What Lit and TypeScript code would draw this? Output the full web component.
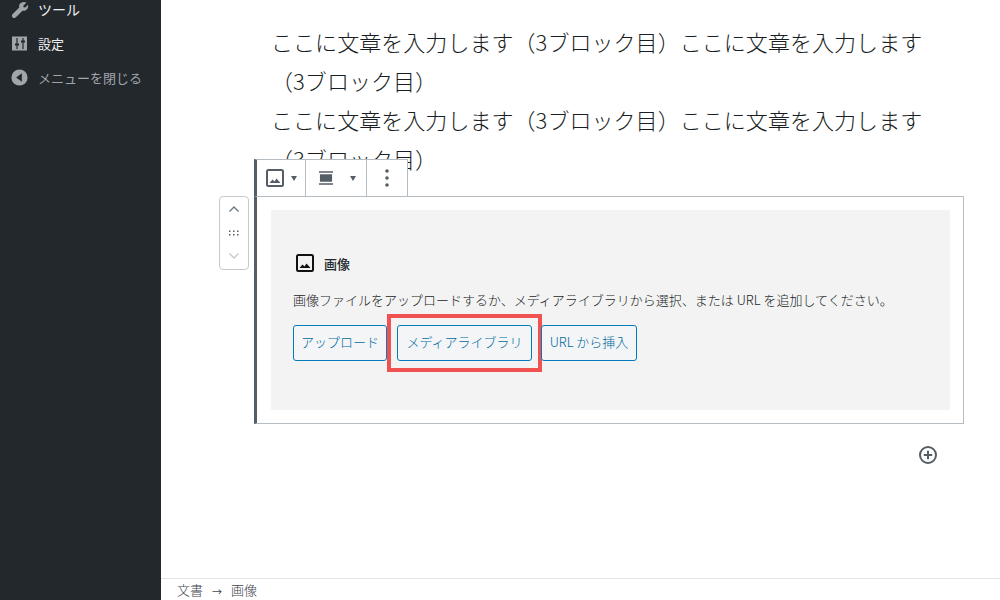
import { LitElement, html, css } from "lit";
import { customElement } from "lit/decorators.js";

const imgIcon = (cls: string) => html`<svg class=${cls} viewBox="0 0 18 18"><rect x="1" y="1" width="16" height="16" rx="1.5" fill="none" stroke="currentColor" stroke-width="2"/><path d="M3.5 14 L6.5 10.5 L8.5 12.4 L10.5 9.5 L14.5 14 Z" fill="currentColor"/></svg>`;

@customElement("app-root")
export class AppRoot extends LitElement {
  static styles = css`
    :host { display: flex; width: 1000px; height: 600px; overflow: hidden; background: #fff; font-family: "Noto Sans CJK JP", "Noto Sans", sans-serif; font-weight: 300; color: #23282d; }
    .side { width: 161px; flex: none; background: #23282d; display: flex; flex-direction: column; box-sizing: border-box; }
    .item { height: 34.5px; display: flex; align-items: center; gap: 9px; padding-left: 10px; font-size: 13px; font-weight: 400; color: #eee; }
    .item:first-child { height: 20px; align-items: flex-end; margin-top: -1px; margin-bottom: 7px; font-size: 14px; }
    .item.dim { color: #a0a5aa; }
    .item svg { width: 19px; height: 19px; flex: none; }
    .main { flex: 1; min-width: 0; display: flex; flex-direction: column; }
    .scroll { flex: 1; min-height: 0; overflow: hidden; padding-top: 22px; box-sizing: border-box; }
    .text { margin: 0 0 0 110px; width: 662px; font-size: 22px; letter-spacing: 0.05px; line-height: 39px; color: #191e23; }
    .block { position: relative; margin: 18px 0 0 93px; width: 710px; height: 228px; box-sizing: border-box; border: 1px solid #b5bcc2; border-left: 3px solid #555d66; padding: 13px 13px 13px 14px; }
    .toolbar { position: absolute; left: -3px; top: -38px; height: 36px; border-left: 3px solid #555d66; display: flex; background: #fff; border-top: 1px solid #b5bcc2; }
    .tb { display: flex; align-items: center; border-right: 1px solid #b5bcc2; box-sizing: border-box; color: #555d66; }
    .tb1 { width: 49px; padding-left: 9px; gap: 7px; }
    .tb2 { width: 61px; padding-left: 13px; gap: 17px; }
    .tb3 { width: 41px; justify-content: center; }
    .tb1 svg.i { width: 18px; height: 18px; }
    .tb2 svg.i { width: 14px; height: 14px; }
    .caret { width: 0; height: 0; border-left: 3px solid transparent; border-right: 3px solid transparent; border-top: 5px solid #555d66; }
    .mover { position: absolute; left: -38px; top: -1px; width: 30px; height: 74px; box-sizing: border-box; border: 1px solid #c5cace; border-radius: 4px; background: #fff; display: flex; flex-direction: column; align-items: center; justify-content: space-between; padding: 8px 0 9px; color: #555d66; }
    .mover svg { display: block; }
    .ph { height: 200px; background: #f3f3f3; padding: 42px 22px 0; box-sizing: border-box; }
    .lab { display: flex; align-items: center; gap: 10px; padding-left: 3px; font-size: 13px; font-weight: 500; color: #23282d; height: 22px; }
    .lab svg { width: 18px; height: 18px; color: #111; }
    .desc { margin: 16px 0 0; font-size: 13px; line-height: 20px; color: #191e23; white-space: nowrap; }
    .btns { display: flex; margin-top: 15px; }
    .btn { position: relative; height: 36px; box-sizing: border-box; padding-bottom: 3px; border: 1px solid #007cba; border-radius: 3px; color: #006ba1; background: #f3f5f6; font-size: 13px; display: flex; align-items: center; justify-content: center; white-space: nowrap; }
    .b1 { width: 94px; }
    .b2 { width: 135px; margin-left: 10px; }
    .b3 { width: 96px; margin-left: 9px; }
    .mark { position: absolute; left: -11px; top: -12px; width: 155px; height: 58px; box-sizing: border-box; border: 4.5px solid #f05252; pointer-events: none; }
    .add { margin: 21px 0 0 757px; width: 20px; height: 20px; color: #555d66; display: block; }
    .foot { height: 21px; flex: none; border-top: 1px solid #e2e4e7; padding-left: 16px; display: flex; align-items: center; gap: 9px; font-size: 13px; color: #40464d; }
    .arr { font-size: 10px; padding-top: 4px; font-weight: 400; }
  `;

  render() {
    return html`
      <aside class="side">
        <div class="item">
          <svg viewBox="0 0 20 20"><path fill="#a0a5aa" d="M17.2 2.8 L14 6 L14.3 7.7 L16 8 L19 5 C19.6 7.6 18.4 10.2 16.2 11.1 C15.1 11.5 14.1 11.5 13.2 11.2 L6.2 18.2 C5.2 19.2 3.6 19.2 2.7 18.3 C1.8 17.4 1.8 15.8 2.8 14.8 L9.8 7.8 C9.4 6.8 9.4 5.7 9.9 4.7 C11 2.5 14.6 1.4 17.2 2.8 Z"/></svg>
          <span>ツール</span>
        </div>
        <div class="item">
          <svg viewBox="0 0 19 19"><rect x="2" y="2.5" width="15" height="14" fill="#a0a5aa"/><path d="M7 4v11M13 4v11" stroke="#23282d" stroke-width="1.2"/><rect x="5" y="9.5" width="4" height="2" fill="#23282d"/><rect x="11" y="6.5" width="4" height="2" fill="#23282d"/></svg>
          <span>設定</span>
        </div>
        <div class="item dim">
          <svg viewBox="0 0 20 20"><circle cx="10" cy="10" r="8.5" fill="#a0a5aa"/><path d="M12.5 5.5 V14.5 L6.5 10 Z" fill="#23282d"/></svg>
          <span>メニューを閉じる</span>
        </div>
      </aside>
      <div class="main">
        <div class="scroll">
          <p class="text">ここに文章を入力します（3ブロック目）ここに文章を入力します（3ブロック目）<br>ここに文章を入力します（3ブロック目）ここに文章を入力します（3ブロック目）</p>
          <div class="block">
            <div class="toolbar">
              <div class="tb tb1">${imgIcon("i")}<span class="caret"></span></div>
              <div class="tb tb2">
                <svg class="i" viewBox="0 0 15 15"><path d="M0 1h15M0 14h15" stroke="currentColor" stroke-width="1.6"/><rect x="1" y="3.5" width="13" height="8" fill="currentColor"/></svg>
                <span class="caret"></span>
              </div>
              <div class="tb tb3">
                <svg width="4" height="18" viewBox="0 0 4 18"><circle cx="2" cy="2" r="1.8" fill="currentColor"/><circle cx="2" cy="9" r="1.8" fill="currentColor"/><circle cx="2" cy="16" r="1.8" fill="currentColor"/></svg>
              </div>
            </div>
            <div class="mover">
              <svg width="12" height="8" viewBox="0 0 12 8"><path d="M1.5 6.5 L6 2 L10.5 6.5" fill="none" stroke="#6c7781" stroke-width="1.4"/></svg>
              <svg width="12" height="6" viewBox="0 0 12 6"><g fill="#555d66"><rect x="1" y="0.5" width="1.5" height="1.5"/><rect x="5" y="0.5" width="1.5" height="1.5"/><rect x="9" y="0.5" width="1.5" height="1.5"/><rect x="1" y="4" width="1.5" height="1.5"/><rect x="5" y="4" width="1.5" height="1.5"/><rect x="9" y="4" width="1.5" height="1.5"/></g></svg>
              <svg width="12" height="8" viewBox="0 0 12 8"><path d="M1.5 1.5 L6 6 L10.5 1.5" fill="none" stroke="#c5cace" stroke-width="1.4"/></svg>
            </div>
            <div class="ph">
              <div class="lab">${imgIcon("")}<span>画像</span></div>
              <p class="desc">画像ファイルをアップロードするか、メディアライブラリから選択、または URL を追加してください。</p>
              <div class="btns">
                <div class="btn b1">アップロード</div>
                <div class="btn b2">メディアライブラリ<span class="mark"></span></div>
                <div class="btn b3">URL から挿入</div>
              </div>
            </div>
          </div>
          <svg class="add" viewBox="0 0 20 20"><circle cx="10" cy="10" r="8" fill="none" stroke="currentColor" stroke-width="2"/><path d="M10 5.8v8.4M5.8 10h8.4" stroke="currentColor" stroke-width="2"/></svg>
        </div>
        <div class="foot"><span>文書</span><span class="arr">→</span><span>画像</span></div>
      </div>
    `;
  }
}
